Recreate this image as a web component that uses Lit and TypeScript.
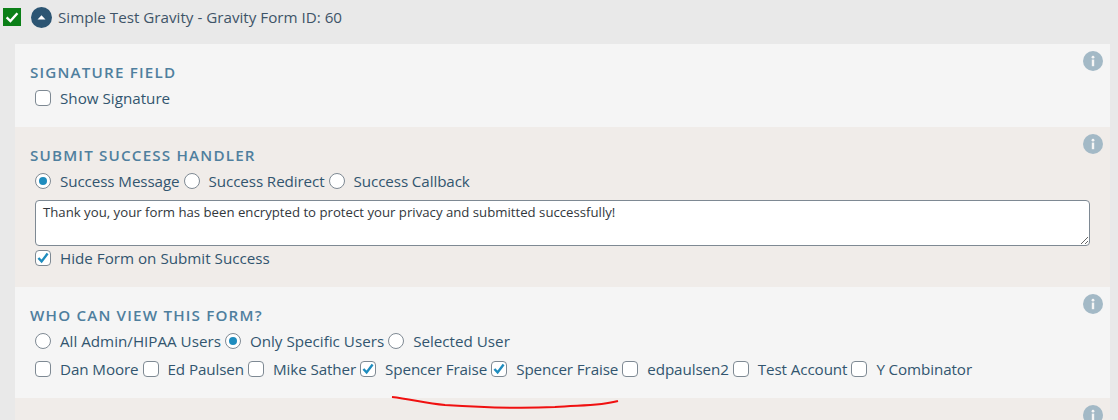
import { LitElement, html, css, svg } from "lit";
import { customElement } from "lit/decorators.js";

type Opt = { label: string; on?: boolean };

const infoIcon = html`<svg class="info" width="20" height="20" viewBox="0 0 20 20">
  <circle cx="10" cy="10" r="10" fill="#a3b9c6"></circle>
  <rect x="8.8" y="8.6" width="2.4" height="6.6" fill="#f5f5f5"></rect>
  <circle cx="10" cy="6.2" r="1.4" fill="#f5f5f5"></circle>
</svg>`;

const tick = svg`<path d="M3.4 8 L6.6 11.4 L12.6 3.6" fill="none" stroke="#1e8cbe" stroke-width="2.4"></path>`;

@customElement("app-root")
class AppRoot extends LitElement {
  static styles = css`
    :host {
      display: block;
      position: relative;
      height: 420px;
      overflow: hidden;
      background: #e9e9e9;
      font-family: "Open Sans", "Noto Sans", sans-serif;
      font-size: 15.2px;
      color: #32556f;
    }
    .head {
      display: flex;
      align-items: center;
      height: 34px;
      padding-left: 3px;
    }
    .green {
      width: 18px;
      height: 18px;
      margin-right: 10px;
      display: block;
    }
    .toggle {
      width: 21px;
      height: 21px;
      margin-right: 6px;
      display: block;
    }
    .head span {
      color: #3e5468;
    }
    .panels {
      margin: 10px 8px 0 15px;
    }
    .panel {
      position: relative;
      box-sizing: border-box;
      padding: 18px 20px 0 20px;
    }
    .light {
      background: #f5f5f5;
    }
    .tan {
      background: #f0ece9;
    }
    .info {
      position: absolute;
      top: 7px;
      right: 7px;
    }
    h3 {
      margin: 0 0 3px -5px;
      font-size: 15.2px;
      line-height: 20px;
      font-weight: 600;
      letter-spacing: 1.18px;
      color: #4f7f9e;
      text-transform: uppercase;
    }
    .row {
      display: flex;
      align-items: center;
      height: 25px;
    }
    .item {
      display: flex;
      align-items: center;
      margin-right: 4px;
    }
    .item span {
      margin-left: 9px;
      white-space: nowrap;
    }
    .box {
      width: 16px;
      height: 16px;
      display: block;
      flex: none;
    }
    textarea {
      display: block;
      box-sizing: border-box;
      width: 100%;
      height: 46px;
      margin: 7px 0 0;
      padding: 2px 7px;
      border: 1px solid #7e8993;
      border-radius: 4px;
      background: #fff;
      font: inherit;
      font-size: 13.2px;
      line-height: 18px;
      color: #32373c;
    }
    .after-text {
      margin-top: -1px;
    }
    .tight {
      letter-spacing: -0.1px;
    }
    .users {
      margin-top: 3px;
    }
    .stroke {
      position: absolute;
      left: 385px;
      top: 390px;
    }
  `;

  private check(on?: boolean) {
    return html`<svg class="box" viewBox="0 0 16 16">
      <rect x="0.5" y="0.5" width="15" height="15" rx="3.5" fill="#fff" stroke="#7e8993"></rect>
      ${on ? tick : ""}
    </svg>`;
  }

  private radio(on?: boolean) {
    return html`<svg class="box" viewBox="0 0 16 16">
      <circle cx="8" cy="8" r="7.5" fill="#fff" stroke="#7e8993"></circle>
      ${on ? svg`<circle cx="8" cy="8" r="4" fill="#1e8cbe"></circle>` : ""}
    </svg>`;
  }

  private radios(opts: Opt[], cls = "") {
    return html`<div class="row ${cls}">
      ${opts.map(o => html`<label class="item">${this.radio(o.on)}<span>${o.label}</span></label>`)}
    </div>`;
  }

  private checks(opts: Opt[], cls = "") {
    return html`<div class="row ${cls}">
      ${opts.map(o => html`<label class="item">${this.check(o.on)}<span>${o.label}</span></label>`)}
    </div>`;
  }

  render() {
    return html`
      <div class="head">
        <svg class="green" viewBox="0 0 18 18">
          <rect width="18" height="18" fill="#0b7f17"></rect>
          <path d="M3.6 9.4 L7.4 13 L14.4 5.2" fill="none" stroke="#fff" stroke-width="2.4"></path>
        </svg>
        <svg class="toggle" viewBox="0 0 21 21">
          <circle cx="10.5" cy="10.5" r="10.5" fill="#2c5573"></circle>
          <path d="M6.5 12.6 L10.5 8.2 L14.5 12.6 Z" fill="#fff"></path>
        </svg>
        <span>Simple Test Gravity - Gravity Form ID: 60</span>
      </div>
      <div class="panels">
        <section class="panel light" style="height:83px">
          ${infoIcon}
          <h3>Signature Field</h3>
          ${this.checks([{ label: "Show Signature" }])}
        </section>
        <section class="panel tan" style="height:160px">
          ${infoIcon}
          <h3>Submit Success Handler</h3>
          ${this.radios(
            [
              { label: "Success Message", on: true },
              { label: "Success Redirect" },
              { label: "Success Callback" },
            ],
            "tight",
          )}
          <textarea>Thank you, your form has been encrypted to protect your privacy and submitted successfully!</textarea>
          ${this.checks([{ label: "Hide Form on Submit Success", on: true }], "after-text")}
        </section>
        <section class="panel light" style="height:111px">
          ${infoIcon}
          <h3>Who can view this form?</h3>
          ${this.radios([
            { label: "All Admin/HIPAA Users" },
            { label: "Only Specific Users", on: true },
            { label: "Selected User" },
          ])}
          ${this.checks(
            [
              { label: "Dan Moore" },
              { label: "Ed Paulsen" },
              { label: "Mike Sather" },
              { label: "Spencer Fraise", on: true },
              { label: "Spencer Fraise", on: true },
              { label: "edpaulsen2" },
              { label: "Test Account" },
              { label: "Y Combinator" },
            ],
            "users tight",
          )}
        </section>
        <section class="panel tan" style="height:40px">${infoIcon}</section>
      </div>
      <svg class="stroke" width="240" height="24" viewBox="0 0 240 24">
        <path d="M7 7 C25 9 40 13 60 15 C90 17 130 19 170 17 C195 15 215 16 233 11" fill="none" stroke="#f01010" stroke-width="2"></path>
      </svg>
    `;
  }
}
